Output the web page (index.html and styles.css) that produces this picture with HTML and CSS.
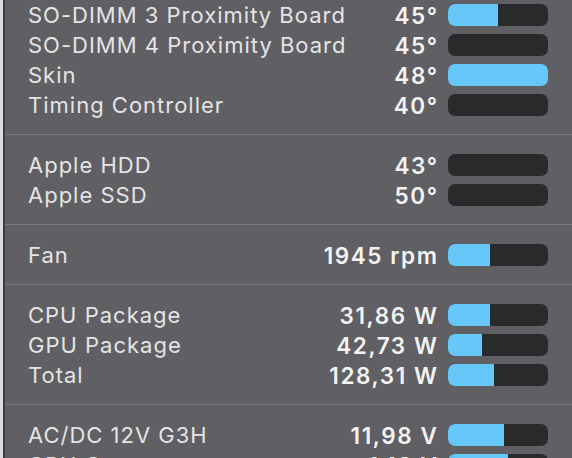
FILE: index.html
```html
<!DOCTYPE html>
<html>
<head>
<meta charset="utf-8">
<link rel="stylesheet" href="styles.css">
</head>
<body>
<div class="page">
  <div class="edge"></div>
  <div class="panel">
    <div class="row"><span class="label">SO-DIMM 3 Proximity Board</span><span class="value">45°</span><span class="bar"><span class="fill" style="width:50px"></span></span></div>
    <div class="row"><span class="label">SO-DIMM 4 Proximity Board</span><span class="value">45°</span><span class="bar"><span class="fill" style="width:0px"></span></span></div>
    <div class="row"><span class="label">Skin</span><span class="value">48°</span><span class="bar"><span class="fill" style="width:100px"></span></span></div>
    <div class="row"><span class="label">Timing Controller</span><span class="value">40°</span><span class="bar"><span class="fill" style="width:0px"></span></span></div>
    <div class="sep"></div>
    <div class="row"><span class="label">Apple HDD</span><span class="value">43°</span><span class="bar"><span class="fill" style="width:0px"></span></span></div>
    <div class="row"><span class="label">Apple SSD</span><span class="value">50°</span><span class="bar"><span class="fill" style="width:0px"></span></span></div>
    <div class="sep"></div>
    <div class="row"><span class="label">Fan</span><span class="value">1945 rpm</span><span class="bar"><span class="fill" style="width:42px"></span></span></div>
    <div class="sep"></div>
    <div class="row"><span class="label">CPU Package</span><span class="value">31,86 W</span><span class="bar"><span class="fill" style="width:42px"></span></span></div>
    <div class="row"><span class="label">GPU Package</span><span class="value">42,73 W</span><span class="bar"><span class="fill" style="width:34px"></span></span></div>
    <div class="row"><span class="label">Total</span><span class="value">128,31 W</span><span class="bar"><span class="fill" style="width:46px"></span></span></div>
    <div class="sep"></div>
    <div class="row"><span class="label">AC/DC 12V G3H</span><span class="value">11,98 V</span><span class="bar"><span class="fill" style="width:56px"></span></span></div>
    <div class="row"><span class="label">CPU Core</span><span class="value">1,13 V</span><span class="bar"><span class="fill" style="width:60px"></span></span></div>
  </div>
</div>
</body>
</html>
```
FILE: styles.css
```css
html, body {
  margin: 0;
  padding: 0;
  height: 100%;
  overflow: hidden;
}
body {
  background: #d9d9d9;
  font-family: "Inter", "Liberation Sans", sans-serif;
}
.page {
  display: flex;
  height: 458px;
}
.edge {
  width: 3px;
  background: #dcdcdc;
  border-right: 2px solid #3c3b3e;
  flex: none;
}
.panel {
  flex: 1;
  background: #605f63;
  display: flex;
  flex-direction: column;
  overflow: hidden;
}
.row {
  display: grid;
  grid-template-columns: 1fr auto 100px;
  column-gap: 11px;
  align-items: center;
  height: 30px;
  flex: none;
  padding: 0 24px 0 23px;
}
.label {
  color: #e4e4e5;
  font-size: 22px;
  letter-spacing: 1px;
  white-space: nowrap;
}
.value {
  color: #f3f3f3;
  font-size: 22.5px;
  letter-spacing: 1.6px;
  margin-right: -1.6px;
  font-weight: 600;
  text-align: right;
  white-space: nowrap;
}
.bar {
  display: block;
  height: 22px;
  border-radius: 7px;
  background: #2a292c;
  overflow: hidden;
}
.fill {
  display: block;
  height: 100%;
  background: #66c8f8;
}
.sep {
  flex: none;
  height: 30px;
  display: flex;
  align-items: center;
}
.sep::before {
  content: "";
  display: block;
  width: 100%;
  height: 1px;
  margin-top: -1px;
  background: #77767a;
}
```
